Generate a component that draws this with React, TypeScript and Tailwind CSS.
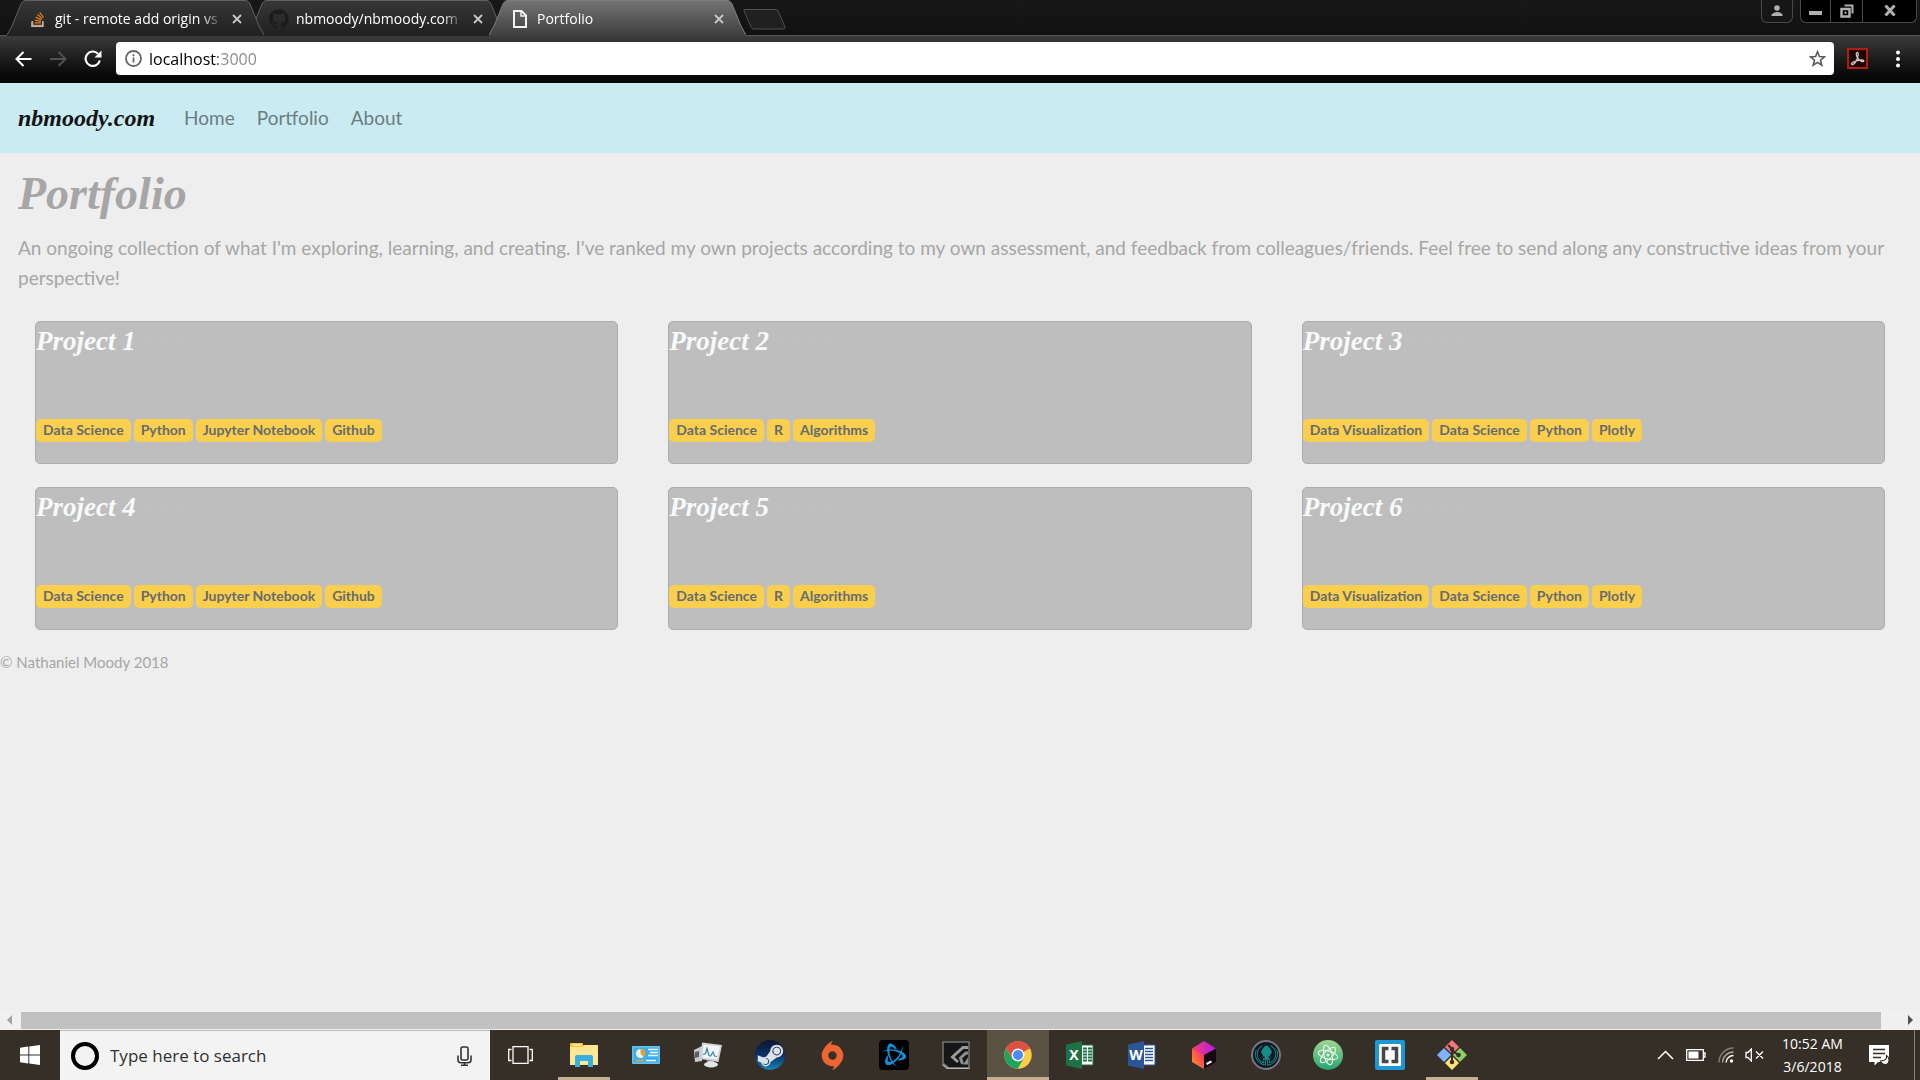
import React from "react";
import { FaStackOverflow, FaGithub, FaSteamSymbol, FaStar, FaRegStar } from "react-icons/fa";
import { SiOrigin, SiBattledotnet, SiGitkraken } from "react-icons/si";

/* ---------- Browser chrome ---------- */

function PageIcon() {
  return (
    <svg width="14" height="18" viewBox="0 0 14 18" fill="none" stroke="#f4f4f4" strokeWidth="2">
      <path d="M1 1h7.5L13 5.500V17H1z" />
      <path d="M8 1v5h5" strokeWidth="1.500" />
    </svg>
  );
}

function StackIcon() {
  return (
    <span className="relative block h-4 w-4">
      <FaStackOverflow size={16} color="#e87c22" />
      <svg className="absolute inset-0" width="16" height="16" viewBox="0 0 16 16" fill="none" stroke="#b9b9b9" strokeWidth="1.600">
        <path d="M2 10.500V15.200H12.800V10.500" />
      </svg>
    </span>
  );
}

type TabProps = { title: string; icon: React.ReactNode; active?: boolean; layer: string };

function Tab({ title, icon, active, layer }: TabProps) {
  const id = "tab-" + title.slice(0, 3);
  return (
    <div className={`relative -mr-4 h-[35px] w-[257px] ${layer}`}>
      <svg className="absolute inset-0" width="257" height="36" viewBox="0 0 257 36">
        <defs>
          <linearGradient id={id} x1="0" y1="0" x2="0" y2="1">
            <stop offset="0" stopColor={active ? "#747474" : "#373737"} />
            <stop offset="1" stopColor={active ? "#3e3e3e" : "#202020"} />
          </linearGradient>
        </defs>
        <path d="M0 35 L5 26 L14 4 Q16 0.500 18 0.500 H239 Q241 0.500 243 4 L252 26 L257 35 V36 H0z" fill={`url(#${id})`} />
        <path d="M0 35 L5 26 L14 4 Q16 0.500 18 0.500 H239 Q241 0.500 243 4 L252 26 L257 35" fill="none" stroke={active ? "#7d7d7d" : "#606060"} />
      </svg>
      <div className="relative flex h-[37px] items-center pl-5">
        <span className="flex w-[22px] shrink-0 justify-center">{icon}</span>
        <button className="ml-[6px] w-[168px] overflow-hidden whitespace-nowrap text-left text-sm text-white [mask-image:linear-gradient(90deg,#000_146px,transparent_168px)]">
          {title}
        </button>
        <button aria-label={`Close ${title}`} className="ml-[9px] text-[#c9c9c9]">
          <svg width="10" height="10" viewBox="0 0 10 10" stroke="currentColor" strokeWidth="1.800">
            <path d="M1 1l8 8M9 1L1 9" />
          </svg>
        </button>
      </div>
    </div>
  );
}

function WindowControls() {
  return (
    <div className="ml-auto mr-[3px] flex h-[23px] gap-[7px] text-[#b0b0b0]">
      <button aria-label="User" className="flex w-8 items-center justify-center rounded-b-md border border-t-0 border-[#484848] bg-[#161616] pb-px">
        <svg width="12" height="12" viewBox="0 0 12 12" fill="currentColor">
          <circle cx="6" cy="3" r="2.800" />
          <path d="M0.500 11V9.500Q2.500 7 6 7t5.500 2.500V11z" />
        </svg>
      </button>
      <div className="flex divide-x divide-[#484848] rounded-b-md border border-t-0 border-[#484848] bg-black">
        <button aria-label="Minimize" className="flex w-[30px] items-center justify-center pt-1">
          <svg width="13" height="4"><rect width="13" height="4" fill="currentColor" /></svg>
        </button>
        <button aria-label="Restore" className="flex w-8 items-center justify-center">
          <svg width="14" height="14" viewBox="0 0 14 14" fill="none" stroke="currentColor">
            <path d="M4.500 1.500h8v8" strokeWidth="2" />
            <rect x="1.500" y="5" width="8" height="7.500" strokeWidth="2.500" />
            <rect x="4.500" y="7.700" width="2" height="2" fill="currentColor" stroke="none" />
          </svg>
        </button>
        <button aria-label="Close" className="flex w-[53px] items-center justify-center pb-px">
          <svg width="12" height="11" viewBox="0 0 12 11" stroke="currentColor" strokeWidth="3">
            <path d="M1.500 0.500l9 10M10.500 0.500l-9 10" />
          </svg>
        </button>
      </div>
    </div>
  );
}

function Browser() {
  return (
    <header className="font-['Open_Sans',sans-serif]">
      <div className="flex h-[35px] bg-gradient-to-b from-[#181818] to-[#111] pl-[7px]">
        <Tab title="git - remote add origin vs" icon={<StackIcon />} layer="z-20" />
        <Tab title="nbmoody/nbmoody.com" icon={<FaGithub size={20} color="#1b1b1b" />} layer="z-10" />
        <Tab title="Portfolio" icon={<PageIcon />} active layer="z-30" />
        <button aria-label="New tab" className="ml-[13px] mt-[9px] h-[21px]">
          <svg width="43" height="21" viewBox="0 0 43 21">
            <path d="M2 0.500H33q1.500 0 2 1.500L42 18q0.500 2-1.500 2H11q-2 0-2.700-1.700L1 2Q0.500 0.500 2 0.500z" fill="#202020" stroke="#505050" />
          </svg>
        </button>
        <WindowControls />
      </div>
      <div className="flex h-12 items-center border-t border-[#555] bg-gradient-to-b from-[#3c3c3c] to-[#080808] to-85% pb-[2px] pl-[15px]">
        <button aria-label="Back" className="text-white">
          <svg width="17" height="16" viewBox="0 0 17 16" fill="none" stroke="currentColor" strokeWidth="2"><path d="M16.500 8H1.500M8.500 1L1.500 8l7 7" /></svg>
        </button>
        <button aria-label="Forward" className="ml-[18px] text-[#505050]">
          <svg width="17" height="16" viewBox="0 0 17 16" fill="none" stroke="currentColor" strokeWidth="2"><path d="M0 8h15M8.500 1l7 7-7 7" /></svg>
        </button>
        <button aria-label="Reload" className="ml-[17px] text-white">
          <svg width="18" height="17" viewBox="0 0 18 17" fill="none" stroke="currentColor" strokeWidth="2.200">
            <path d="M15.800 10.500A7.200 7.200 0 1 1 14 3.700" />
            <path d="M17.500 0.500V7.500H10.500z" fill="currentColor" stroke="none" />
          </svg>
        </button>
        <div className="ml-[14px] flex h-[33px] flex-1 items-center rounded-sm bg-white pl-[9px] pr-2">
          <svg width="17" height="17" viewBox="0 0 17 17" fill="none" stroke="#666" strokeWidth="1.800">
            <circle cx="8.500" cy="8.500" r="7.500" />
            <path d="M8.500 7.500V12.500M8.500 4.300V6.200" />
          </svg>
          <input
            aria-label="Address"
            defaultValue="localhost:3000"
            className="ml-[7px] min-w-0 flex-1 bg-[linear-gradient(90deg,#000_69px,#888_69px)] bg-clip-text text-base text-transparent outline-none"
          />
          <button aria-label="Bookmark this page">
            <svg width="17" height="17" viewBox="0 0 17 17" fill="none" stroke="#5a5a5a" strokeWidth="1.600">
              <path d="M8.500 1.800l1.900 4.800 5.100.3-4 3.300 1.300 5-4.300-2.800-4.300 2.800 1.300-5-4-3.300 5.100-.3z" />
            </svg>
          </button>
        </div>
        <button aria-label="Adobe Acrobat" className="ml-[13px]">
          <svg width="21" height="21" viewBox="0 0 21 21" fill="none">
            <rect x="1" y="1" width="19" height="19" fill="#1d0302" stroke="#b11f0c" strokeWidth="2" />
            <path d="M10 4.500c1.800-.5 1.400 3 .2 6.300-1.300 3.300-3.700 6-5.200 5.700-1.600-.8 1.200-3 5.500-4 3.200-.8 6.500-.7 6.300.5-.3 1.400-3.800.3-5.700-2.300C9.300 8.500 8.600 5 10 4.500z" stroke="#d8c8c8" strokeWidth="1.300" />
          </svg>
        </button>
        <button aria-label="Menu" className="ml-7 mr-5">
          <svg width="4" height="18" viewBox="0 0 4 18" fill="#fff"><circle cx="2" cy="2.500" r="2" /><circle cx="2" cy="9" r="2" /><circle cx="2" cy="15.500" r="2" /></svg>
        </button>
      </div>
    </header>
  );
}

/* ---------- Web page ---------- */

const kinds = [
  { tags: ["Data Science", "Python", "Jupyter Notebook", "Github"], rating: 3 },
  { tags: ["Data Science", "R", "Algorithms"], rating: 4 },
  { tags: ["Data Visualization", "Data Science", "Python", "Plotly"], rating: 4 },
];
const projects = [1, 2, 3, 4, 5, 6].map((n) => ({ title: `Project ${n}`, ...kinds[(n - 1) % 3] }));

function Card({ title, tags, rating }: { title: string; tags: string[]; rating: number }) {
  return (
    <article className="flex h-[143px] flex-col rounded-[5px] border border-[#adadad] bg-[#bebebe] pb-[21px]">
      <div className="flex items-center gap-1">
        <h2 className="whitespace-nowrap font-['Liberation_Serif',serif] text-[27px] leading-[38px] font-bold italic text-[#f8f9fa]">{title}</h2>
        <span className="flex text-[#bfbfbf]">
          {[0, 1, 2, 3, 4].map((i) => (i < rating ? <FaStar key={i} size={16} /> : <FaRegStar key={i} size={16} />))}
        </span>
      </div>
      <ul className="mt-auto flex gap-[3px]">
        {tags.map((t) => (
          <li key={t} className="rounded-[5px] bg-[#facf4d] px-[7px] pb-[2px] text-sm leading-[21px] font-bold text-[#666b6e]">{t}</li>
        ))}
      </ul>
    </article>
  );
}

function Site() {
  return (
    <div className="flex min-h-0 flex-1 flex-col bg-[#eee] font-['Lato',sans-serif] text-[#a6a6a6]">
      <nav className="flex h-[70px] items-center bg-[#cbebf2] px-[18px]">
        <a href="#" className="font-['Liberation_Serif',serif] text-2xl font-bold italic text-[#141414]">nbmoody.com</a>
        <div className="ml-[29px] flex gap-[22px] text-[19px] text-[#6c7d82]">
          <a href="#home">Home</a>
          <a href="#portfolio">Portfolio</a>
          <a href="#about">About</a>
        </div>
      </nav>
      <main className="px-[18px]">
        <h1 className="mt-[10px] mb-2 font-['Liberation_Serif',serif] text-[46px] leading-[62px] font-bold italic">Portfolio</h1>
        <p className="mt-2 text-[19px] leading-[30px]">
          An ongoing collection of what I'm exploring, learning, and creating. I've ranked my own projects according to my own
          assessment, and feedback from colleagues/friends. Feel free to send along any constructive ideas from your perspective!
        </p>
        <section className="mt-7 grid grid-cols-3 gap-x-[50px] gap-y-[23px] px-[17px]">
          {projects.map((p) => <Card key={p.title} {...p} />)}
        </section>
      </main>
      <footer className="mt-5 text-[15px] leading-6">© Nathaniel Moody 2018</footer>
      <div className="mt-auto flex h-5 items-center justify-between bg-[#f0f0f0] px-[6px]">
        <svg width="7" height="10" viewBox="0 0 7 10"><path d="M6 0v10L1 5z" fill="#a3a3a3" /></svg>
        <div className="ml-2 mr-[26px] h-[17px] flex-1 bg-[#c1c1c1]" />
        <svg width="7" height="10" viewBox="0 0 7 10"><path d="M1 0v10L6 5z" fill="#505050" /></svg>
      </div>
    </div>
  );
}

/* ---------- Taskbar ---------- */

function ExplorerIcon() {
  return (
    <svg width="28" height="24" viewBox="0 0 28 24">
      <path d="M0 1q0-1 1-1h11q1 0 1 1v1h14q1 0 1 1v19H0z" fill="#f8c73c" />
      <path d="M0 4h13l1.500-2H27q1 0 1 1v19H0z" fill="#ffe694" />
      <path d="M3 2h8" stroke="#fff3c0" strokeWidth="1.500" />
      <path d="M5 24V14q0-2 2-2h14q2 0 2 2v10h-5v-6h-8v6z" fill="#37b0e0" />
    </svg>
  );
}
function PanelIcon() {
  return (
    <svg width="28" height="18" viewBox="0 0 28 18">
      <rect width="28" height="18" rx="1" fill="#62c2f2" />
      <rect x="1.500" y="1.500" width="25" height="15" fill="#3eaee8" />
      <circle cx="8.500" cy="7.500" r="4.500" fill="#e8f4fb" />
      <path d="M8.500 7.500V3a4.500 4.500 0 0 1 3 8z" fill="#f29a22" />
      <path d="M16 3.500h10M18 6.500h8M16 9.500h10" stroke="#e9f7ff" strokeWidth="1.500" />
      <path d="M4 14.500h8" stroke="#f4a52c" strokeWidth="1.500" />
      <path d="M14 14.500h10" stroke="#e9f7ff" strokeWidth="1.500" />
    </svg>
  );
}
function MonitorIcon() {
  return (
    <svg width="28" height="26" viewBox="0 0 28 26">
      <path d="M0 8l8-4v15l-7 1z" fill="#c8ccce" />
      <path d="M1 10l4-1v6l-4 1z" fill="#5b6163" />
      <path d="M8 0.500l20 2.500-3.500 17L6.500 17z" fill="#cfd3d5" />
      <path d="M9.500 2.500L26 4.500 23 17.500 8.500 15.500z" fill="#f1f5f7" />
      <path d="M9 12.500l2.500-1 1.500-5 2 7 1.500.5 2.500-4 1.500 4 2.500.5" fill="none" stroke="#3484ac" strokeWidth="1.200" />
      <path d="M13 18.500h7l-1 4h-5z" fill="#b8bcbe" />
      <ellipse cx="17" cy="22.500" rx="7" ry="3" fill="#e3e5e6" />
    </svg>
  );
}
function SteamIcon() {
  return (
    <span className="flex h-[30px] w-[30px] items-center justify-center overflow-hidden rounded-full bg-gradient-to-b from-[#0b1838] via-[#0d2f63] to-[#1387b8]">
      <FaSteamSymbol size={29} color="#dfe3e8" />
    </span>
  );
}
function GeForceIcon() {
  return (
    <svg width="28" height="28" viewBox="0 0 28 28" fill="none">
      <path d="M1 1h26v26H7L1 22z" fill="#161616" stroke="#757575" strokeWidth="1.500" />
      <path d="M0.500 23.500l5 4h22" stroke="#b8b8b8" strokeWidth="1.500" />
      <path d="M26 6.500h-5L10.500 16l5.500 5" stroke="#9a9a9a" strokeWidth="3" />
      <path d="M26 12h-2l-5.500 5 2 6" stroke="#8d8d8d" strokeWidth="3" />
      <path d="M26 16.500v7h-5z" fill="#8d8d8d" />
    </svg>
  );
}
function ChromeIcon() {
  return (
    <svg width="28" height="28" viewBox="0 0 48 48">
      <circle cx="24" cy="24" r="23.500" fill="#ffce43" />
      <path d="M24 24L3.650 12.250A23.500 23.500 0 0 1 44.350 12.250z" fill="#dd5144" />
      <path d="M24 12.500h20.500a23.500 23.500 0 0 0-41-.5L14 30z" fill="#dd5144" />
      <path d="M3.500 12.500A23.500 23.500 0 0 0 23.500 47.500L34 29.500 24 35 14 30z" fill="#1da462" />
      <circle cx="24" cy="24" r="11" fill="#fff" />
      <circle cx="24" cy="24" r="8.700" fill="#4c8bf5" />
    </svg>
  );
}
function OfficeIcon({ letter, word }: { letter: string; word?: boolean }) {
  const c = word ? "#2a5699" : "#1f7145";
  return (
    <span className="relative block h-7 w-7">
      <svg width="28" height="28" viewBox="0 0 28 28">
        <path d="M14 4h13v20H14z" fill="#fff" stroke={c} />
        {word ? (
          <path d="M17 7.500h8M17 10.500h8M17 13.500h8M17 16.500h8M17 19.500h8" stroke={c} strokeWidth="1.500" />
        ) : (
          <path d="M17 7.500h4M22 7.500h4M17 10.500h4M22 10.500h4M17 13.500h4M22 13.500h4M17 16.500h4M22 16.500h4M17 19.500h4M22 19.500h4" stroke={c} strokeWidth="1.800" />
        )}
        <path d="M0 3.500L16 0v28L0 24.500z" fill={c} />
      </svg>
      <span className="absolute inset-y-0 left-0 flex w-4 items-center justify-center font-['Open_Sans',sans-serif] text-sm font-bold text-white">{letter}</span>
    </span>
  );
}
function ToolboxIcon() {
  return (
    <svg width="24" height="28" viewBox="0 0 24 28">
      <defs>
        <linearGradient id="cubeTop" x1="0" x2="1"><stop stopColor="#fb3e6b" /><stop offset="1" stopColor="#b01bf0" /></linearGradient>
        <linearGradient id="cubeLeft" x1="0" y1="1" x2="1" y2="0"><stop stopColor="#ff9a1f" /><stop offset="1" stopColor="#fd1f6e" /></linearGradient>
      </defs>
      <path d="M12 0l12 7.500L12 15 0 7.500z" fill="url(#cubeTop)" />
      <path d="M0 7.500L12 14v14L0 21z" fill="url(#cubeLeft)" />
      <path d="M24 7.500L12 14v14l12-7z" fill="#150812" />
      <path d="M14.500 23l5-2.700" stroke="#fff" strokeWidth="2" />
    </svg>
  );
}
function AtomIcon() {
  return (
    <span className="flex h-[30px] w-[30px] items-center justify-center rounded-full bg-gradient-to-b from-[#9bd68e] to-[#17a574]">
      <svg width="24" height="24" viewBox="0 0 24 24" fill="none" stroke="#e9f8ee" strokeWidth="1.100">
        <ellipse cx="12" cy="12" rx="10" ry="4" transform="rotate(15 12 12)" />
        <ellipse cx="12" cy="12" rx="10" ry="4" transform="rotate(75 12 12)" />
        <ellipse cx="12" cy="12" rx="10" ry="4" transform="rotate(135 12 12)" />
        <circle cx="12" cy="12" r="1" fill="#e9f8ee" />
      </svg>
    </span>
  );
}
function BracketsIcon() {
  return (
    <svg width="30" height="30" viewBox="0 0 30 30">
      <rect width="30" height="30" rx="2" fill="#1e97d9" />
      <rect x="4" y="4" width="22" height="22" rx="1.500" fill="#fff" />
      <path d="M13.500 8.500H8.500V21.500H13.500M16.500 8.500H21.500V21.500H16.500" fill="none" stroke="#474747" strokeWidth="3.500" />
    </svg>
  );
}
function GitIcon() {
  return (
    <svg width="30" height="30" viewBox="0 0 30 30">
      <path d="M15 0l7 7-7 7-7-7z" fill="#f3787c" />
      <path d="M7 8l7 7-7 7-7-7z" fill="#80b3ff" />
      <path d="M23 8l7 7-7 7-7-7z" fill="#8bd264" />
      <path d="M15 16l7 7-7 7-7-7z" fill="#ffe27a" />
      <g stroke="#362f27" strokeWidth="2" fill="#362f27">
        <path d="M11 5l4 4v13M15 10l6 5" fill="none" />
        <circle cx="15" cy="9" r="1.300" /><circle cx="21.500" cy="15" r="1.300" /><circle cx="15" cy="22" r="1.300" />
      </g>
    </svg>
  );
}

type AppItem = { name: string; icon: React.ReactNode; state?: "running" | "active" };

const apps: AppItem[] = [
  { name: "File Explorer", icon: <ExplorerIcon />, state: "running" },
  { name: "Control Panel", icon: <PanelIcon /> },
  { name: "Performance Monitor", icon: <MonitorIcon /> },
  { name: "Steam", icon: <SteamIcon /> },
  { name: "Origin", icon: <SiOrigin size={29} color="#ee6433" /> },
  {
    name: "Battle.net",
    icon: <span className="flex h-[30px] w-[30px] items-center justify-center rounded-sm bg-black"><SiBattledotnet size={24} color="#0f93e0" /></span>,
  },
  { name: "GeForce Experience", icon: <GeForceIcon /> },
  { name: "Chrome", icon: <ChromeIcon />, state: "active" },
  { name: "Excel", icon: <OfficeIcon letter="X" /> },
  { name: "Word", icon: <OfficeIcon letter="W" word /> },
  { name: "Toolbox", icon: <ToolboxIcon /> },
  {
    name: "GitKraken",
    icon: <span className="flex h-[30px] w-[30px] items-center justify-center rounded-full border-2 border-[#77777f] bg-[#121626]"><SiGitkraken size={23} color="#138f86" /></span>,
  },
  { name: "Atom", icon: <AtomIcon /> },
  { name: "Brackets", icon: <BracketsIcon /> },
  { name: "Git Bash", icon: <GitIcon />, state: "running" },
];

function Taskbar() {
  return (
    <div className="flex h-[50px] shrink-0 bg-[#362f27] font-['Open_Sans',sans-serif] text-white">
      <button aria-label="Start" className="flex w-[60px] items-center justify-center">
        <svg width="20" height="20" viewBox="0 0 20 20" fill="#fff">
          <path d="M0 2.700l8.300-1.200v8H0zM9.300 1.400L20 0v9.500H9.300zM0 10.500h8.300v8L0 17.300zM9.300 10.500H20V20L9.300 18.600z" />
        </svg>
      </button>
      <div className="flex w-[430px] items-center border-t border-[#bdbdbd] bg-[#f3f3f3] pl-[11px] pr-[18px]">
        <span className="h-7 w-7 rounded-full border-4 border-black" />
        <input aria-label="Search" placeholder="Type here to search" className="ml-[11px] min-w-0 flex-1 text-[17px] text-black outline-none placeholder:text-[#303030]" />
        <button aria-label="Voice search">
          <svg width="15" height="20" viewBox="0 0 15 20" fill="none" stroke="#333" strokeWidth="1.600">
            <rect x="4" y="1" width="7" height="13" rx="1.500" />
            <path d="M1 9.500V14q0 2.800 3 2.800h7q3 0 3-2.800V9.500M7.500 17v2M4 19.200h7" />
          </svg>
        </button>
      </div>
      <button aria-label="Task View" className="mr-[3px] flex w-[60px] items-center justify-center">
        <svg width="25" height="18" viewBox="0 0 25 18" fill="none" stroke="#fff" strokeWidth="1.300">
          <path d="M5 0.700h15v16.600H5zM3.500 3.500H0.700v11h2.800M21.500 3.500h2.800v11h-2.800" />
        </svg>
      </button>
      {apps.map((a) => (
        <button
          key={a.name}
          aria-label={a.name}
          className={`relative flex w-[62px] items-center justify-center ${a.state === "active" ? "bg-[#5a5142]" : ""}`}
        >
          {a.icon}
          {a.state && <span className={`absolute bottom-0 h-[3px] bg-[#c6ae92] ${a.state === "active" ? "inset-x-0" : "inset-x-[5px]"}`} />}
        </button>
      ))}
      <div className="ml-auto flex items-center">
        <svg width="17" height="10" viewBox="0 0 17 10" fill="none" stroke="#fff" strokeWidth="1.500"><path d="M1 9l7.500-7.500L16 9" /></svg>
        <svg className="ml-3" width="20" height="12" viewBox="0 0 20 12" fill="none" stroke="#fff" strokeWidth="1.300">
          <path d="M0.700 0.700h16.600v10.600H0.700zM17.500 4h1.500v4h-1.500" />
          <rect x="2.500" y="2.500" width="10" height="7" fill="#fff" stroke="none" />
        </svg>
        <svg className="ml-3" width="16" height="16" viewBox="0 0 16 16" fill="none" strokeWidth="1.400">
          <path d="M1 15.500A14.500 14.500 0 0 1 15.500 1" stroke="#85817b" />
          <path d="M4.500 15.500A11 11 0 0 1 15.500 5" stroke="#aaa69f" />
          <path d="M8 15.500A7.500 7.500 0 0 1 15.500 8.500" stroke="#fff" />
          <circle cx="13.500" cy="14" r="1.700" fill="#fff" />
        </svg>
        <svg className="ml-[11px]" width="19" height="14" viewBox="0 0 19 14" fill="none" stroke="#fff" strokeWidth="1.300">
          <path d="M1 4.500h2l3.300-3.500v12L3 9.500H1zM11 3.500l7 7M18 3.500l-7 7" />
        </svg>
        <time className="ml-[17px] w-[63px] text-center text-sm leading-[23px] whitespace-nowrap">
          10:52 AM<br />3/6/2018
        </time>
        <button aria-label="Notifications" className="ml-[25px]">
          <svg width="21" height="21" viewBox="0 0 21 21">
            <path d="M0 0h20v17H9l-3.500 3.500V17H0z" fill="#fff" />
            <path d="M4 4.500h12M4 8.500h12M4 12.500h8" stroke="#362f27" strokeWidth="1.400" />
            <path d="M17.500 10.500q1 5-6 5.500 1.500 4 5.500 3.500 3.500-1 3-5-.5-3-2.500-4z" fill="#fff" stroke="#362f27" strokeWidth="1.200" />
          </svg>
        </button>
        <span className="ml-6 mr-[5px] h-[50px] w-px bg-[#857f77]" />
      </div>
    </div>
  );
}

export default function App() {
  return (
    <div className="flex h-screen flex-col overflow-hidden">
      <Browser />
      <Site />
      <Taskbar />
    </div>
  );
}
